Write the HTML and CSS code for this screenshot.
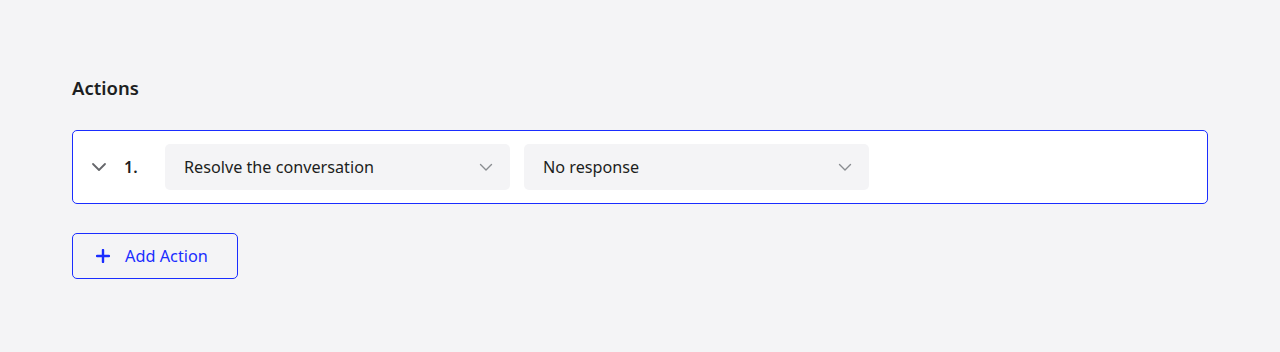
FILE: index.html
```html
<!DOCTYPE html>
<html lang="en">

<head>
  <meta charset="UTF-8">
  <meta name="viewport" content="width=device-width, initial-scale=1.0">
  <title>Actions</title>
  <link rel="stylesheet" href="styles.css">
</head>

<body>
  <div class="page">
    <h2 class="title">Actions</h2>
    <div class="action">
      <span class="toggle">
        <svg width="16" height="16" viewBox="0 0 16 16"><path d="M2 5l6 6 6-6" fill="none" stroke="#65676b" stroke-width="1.8" stroke-linecap="round" stroke-linejoin="round"/></svg>
      </span>
      <span class="num">1.</span>
      <div class="select">
        <span>Resolve the conversation</span>
        <svg width="14" height="14" viewBox="0 0 14 14"><path d="M1.5 4.5l5.5 5.5 5.5-5.5" fill="none" stroke="#8a8d91" stroke-width="1.4" stroke-linecap="round" stroke-linejoin="round"/></svg>
      </div>
      <div class="select">
        <span>No response</span>
        <svg width="14" height="14" viewBox="0 0 14 14"><path d="M1.5 4.5l5.5 5.5 5.5-5.5" fill="none" stroke="#8a8d91" stroke-width="1.4" stroke-linecap="round" stroke-linejoin="round"/></svg>
      </div>
    </div>
    <a class="add" href="javascript:;">
      <svg width="14" height="14" viewBox="0 0 14 14"><path d="M7 1v12M1 7h12" fill="none" stroke="#1a2dff" stroke-width="2.4" stroke-linecap="round"/></svg>
      <span>Add Action</span>
    </a>
  </div>
</body>

</html>
```

FILE: styles.css
```css
html,
body {
  margin: 0;
  padding: 0;
  background-color: #f4f4f6;
  font-family: "Noto Sans", "Open Sans", sans-serif;
  color: #1c1e21;
}

a {
  text-decoration: none;
}

.page {
  padding: 74px 72px 0;
}

.title {
  margin: 0 0 28px;
  font-size: 18.5px;
  line-height: 28px;
  font-weight: 600;
}

.action {
  display: flex;
  align-items: center;
  padding: 13px 14px 13px 18px;
  background-color: #fff;
  border: 1px solid #1a2dff;
  border-radius: 5px;
}

.toggle {
  display: flex;
  width: 16px;
  margin-right: 17px;
}

.num {
  width: 41px;
  font-size: 16px;
  font-weight: 600;
}

.select {
  display: flex;
  align-items: center;
  justify-content: space-between;
  width: 345px;
  height: 46px;
  box-sizing: border-box;
  padding: 0 17px 0 19px;
  margin-right: 14px;
  background-color: #f4f4f6;
  border-radius: 5px;
  font-size: 16.2px;
}

.add {
  display: inline-flex;
  align-items: center;
  gap: 15px;
  margin-top: 29px;
  height: 46px;
  box-sizing: border-box;
  padding: 0 29px 0 23px;
  border: 1px solid #1a2dff;
  border-radius: 5px;
  color: #1a2dff;
  font-size: 16.3px;
}
```
